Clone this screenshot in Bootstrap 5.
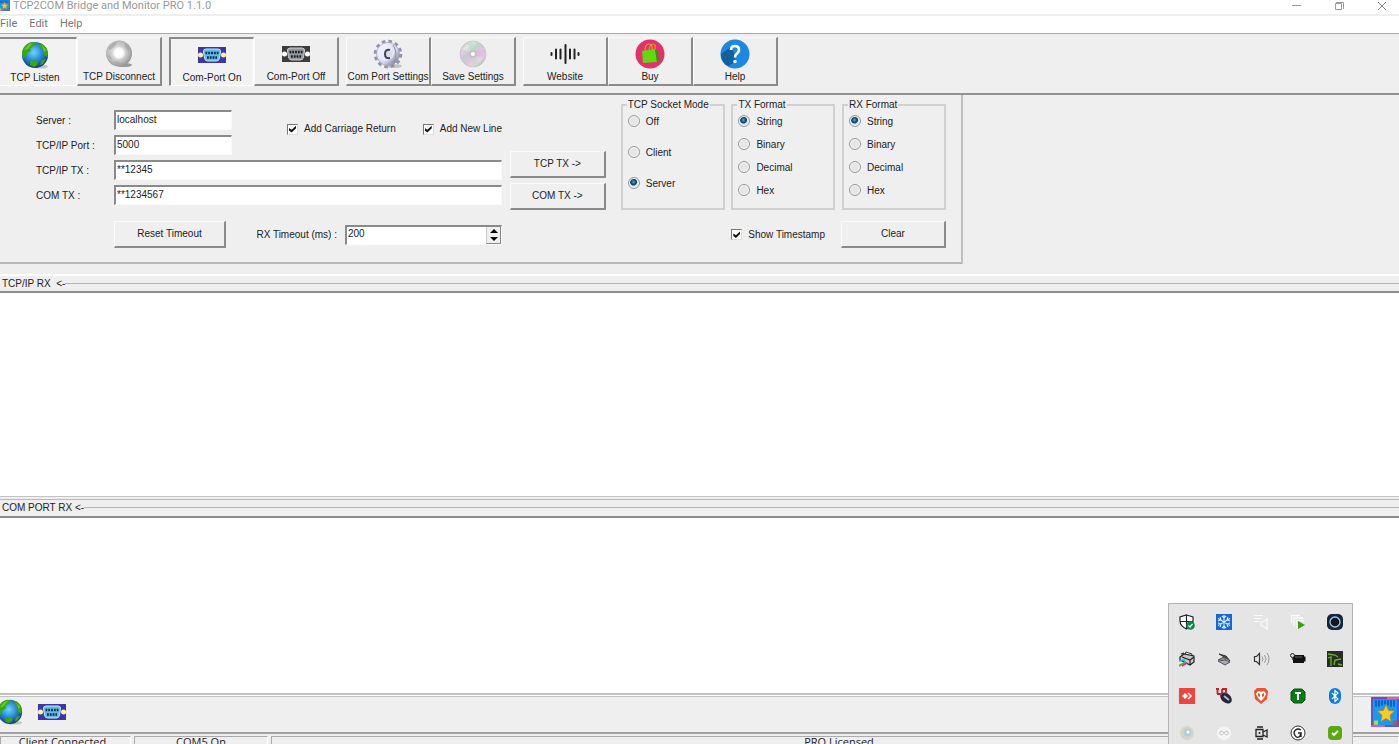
<!DOCTYPE html>
<html lang="en">
<head>
<meta charset="utf-8">
<meta name="viewport" content="width=device-width, initial-scale=1">
<title>TCP2COM Bridge and Monitor PRO 1.1.0</title>
<link href="https://cdn.jsdelivr.net/npm/bootstrap@5.3.0/dist/css/bootstrap.min.css" rel="stylesheet">
<style>
  body { font: 10px/14px "Liberation Sans", Arial, sans-serif; color: #222; background: #efefef; }
  svg { display: block; flex: none; }
  button, input, textarea { font: inherit; color: inherit; }

  .titlebar { height: 16px; background: #fff; border-bottom: 2px solid #efefef; color: #999; }
  .titlebar .caption { font: 11px/11px Roboto, sans-serif; }
  .titlebar .appicon { margin-right: 3px; }
  .wincontrols { gap: 32px; padding-right: 11px; }
  .wincontrols button { border: 0; background: none; padding: 0; color: #888; }
  .menubar { height: 17px; background: #fff; font: 11px/16px Roboto, sans-serif; gap: 12px; }
  .menubar a { color: #777; text-decoration: none; }

  .toolbar { height: 62px; border-top: 1px solid #aaa; border-bottom: 2px solid #929292; padding: 3px 0; gap: 7px; }
  .toolset { height: 50px; }
  .toolset:first-child { margin-left: -8px; }
  .raised { background: #efefef; border: 1px solid #fafafa; border-right: 2px solid #8a8a8a; border-bottom: 2px solid #8a8a8a; padding: 0; }
  .tool { width: 85px; height: 49px; white-space: nowrap; }
  .tool svg { margin: 1px 0; }
  .tool.pressed { background: #f2f2f2; border: 1px solid #fff; border-top: 2px solid #8a8a8a; border-left: 2px solid #8a8a8a; }

  .settings { width: 963px; border-right: 2px solid #c0c0c0; border-bottom: 2px solid #b8b8b8; padding: 3px 15px 14px 36px; }
  .fields { width: 466px; padding-top: 12px; }
  .fieldrow { height: 20px; margin-bottom: 5px; }
  .fieldrow > label { width: 78px; padding-top: 4px; }
  .sunken { background: #fff; border: 1px solid #fafafa; border-top: 2px solid #8a8a8a; border-left: 2px solid #8a8a8a; border-radius: 0; padding: 0 0 2px 1px; height: 20px; outline: 0; }
  .short { width: 198px; }
  .checks { margin: 12px 0 0 55px; gap: 27px; white-space: nowrap; }
  .tick { appearance: none; width: 11px; height: 11px; margin: 0 6px 0 0; background: #fff; border: 1px solid #ddd; border-top-color: #777; border-left-color: #777; display: grid; place-items: center; }
  .tick:checked::before { content: ""; width: 7px; height: 7px; background: #111; clip-path: polygon(0 35%, 38% 62%, 100% 5%, 100% 40%, 38% 100%, 0 72%); }
  .bottomrow { margin-top: 16px; padding-left: 78px; }
  .push { height: 27px; }
  .reset { width: 112px; }
  .spin { width: 157px; background: #fff; }
  .spin input { border: 0; padding: 0 0 2px 1px; outline: 0; background: transparent; }
  .stepper { width: 15px; background: #efefef; border-right: 1px solid #888; border-bottom: 1px solid #888; border-left: 1px solid #ccc; }
  .stepper button { border: 0; background: none; padding: 0; height: 8px; display: grid; place-items: center; }
  .send { width: 96px; margin: 53px 15px 0 8px; gap: 5px; }

  .choices { width: 326px; }
  .modeset { width: 104px; height: 112px; border: 2px solid #d0d0d0; padding: 0 0 0 5px; }
  .modeset legend { float: none; width: auto; font-size: 10px; line-height: 14px; margin: 0 0 3px -1px; padding: 0 1px; }
  .modeset label { height: 23px; }
  .modeset.wide label { height: 31px; }
  .dot { appearance: none; width: 12px; height: 12px; border-radius: 50%; border: 1px solid #999; background: #e6e6e6; box-shadow: inset 0 0 0 1px #f8f8f8; margin: 0 6px 0 0; }
  .dot:checked { background: radial-gradient(circle at 45% 40%, #5bb4dc 0, #14587e 2px, #123e5e 3px, #d5e4ec 4px); border-color: #8a9aa5; }
  .clear { width: 105px; }
  .lower { margin-top: 11px; }

  .rxhead { height: 19px; border-top: 2px solid #fff; border-bottom: 2px solid #8d8d8d; padding-left: 2px; white-space: pre; }
  .rxhead.upper { margin-top: 10px; }
  .rxhead hr { margin: 0; opacity: 1; border-top: 1px solid #b5b5b5; }
  .rxhead.second { height: 22px; border-top: 1px solid #c4c4c4; box-shadow: inset 0 2px #efefef, inset 0 3px #b8b8b8; padding-top: 3px; }
  .log { border: 0; resize: none; background: #fff; outline: 0; padding: 2px; min-height: 0; }
  .log.first { flex: 203 1 0; }
  .log.last { flex: 175 1 0; }
  .tools { height: 41px; border-top: 2px solid #c2c2c2; border-bottom: 2px solid #a0a0a0; box-shadow: inset 0 1px #fff, inset 0 2px #c2c2c2; padding-bottom: 4px; }
  .tools .globe { margin: 0 14px 0 -4px; }
  .statusbar { height: 10px; font: 11px/10px "Open Sans", sans-serif; text-align: center; gap: 3px; padding-top: 2px; }
  .statusbar div { border-top: 1px solid #aaa; border-left: 1px solid #aaa; border-right: 1px solid #fff; height: 20px; }
  .cell { width: 134px; }
  .cell:first-child { width: 131px; padding-right: 6px; }

  .tray { position: absolute; right: 46px; bottom: 0; width: 185px; height: 141px; background: #e5e5e5; border: 1px solid #b4b4b4; border-bottom: 0; padding: 10px 0 0; display: grid; grid-template-columns: repeat(5, 37px); grid-auto-rows: 37px; overflow: hidden; }
  .tray button { border: 0; background: none; padding: 0 0 0 10px; height: 16px; width: 37px; }
</style>
</head>
<body class="vh-100 overflow-hidden d-flex flex-column position-relative">

<svg width="0" height="0" class="position-absolute" aria-hidden="true">
  <defs>
    <radialGradient id="sea" cx=".45" cy=".4" r=".6"><stop offset="0" stop-color="#6fd4ff"/><stop offset=".5" stop-color="#2a8fdc"/><stop offset="1" stop-color="#123c86"/></radialGradient>
    <radialGradient id="silver" cx=".45" cy=".45" r=".6"><stop offset="0" stop-color="#eee"/><stop offset=".6" stop-color="#c4c4c4"/><stop offset="1" stop-color="#8c8c8c"/></radialGradient>
    <radialGradient id="glow"><stop offset="0" stop-color="#fff"/><stop offset=".6" stop-color="#fff" stop-opacity=".9"/><stop offset="1" stop-color="#fff" stop-opacity="0"/></radialGradient>
    <linearGradient id="steel" x2="1" y2="1"><stop offset="0" stop-color="#fff"/><stop offset=".6" stop-color="#d4d4ee"/><stop offset="1" stop-color="#5c6470"/></linearGradient>
    <linearGradient id="disc" x2="1" y2="1"><stop offset="0" stop-color="#aaa"/><stop offset=".25" stop-color="#e6e6e6"/><stop offset=".4" stop-color="#b9d8c9"/><stop offset=".55" stop-color="#e0c0e0"/><stop offset=".75" stop-color="#ddd"/><stop offset="1" stop-color="#8c8c8c"/></linearGradient>
    <symbol id="globe" viewBox="0 0 30 30"><ellipse cx="20" cy="26.500" rx="8" ry="2" fill="#c4c4c4"/><circle cx="15" cy="15" r="13" fill="url(#sea)"/><path d="M2 14C2 8 6 3 12 2l4 1-2 3-4 2 1 3-4 2-1 4-3 1zM20 3c4 1 7 5 8 9l-1 5-3-2-1-5-3-3zM10 21l4-1 4 2-1 3-3 2-4-2zM22 20l4-1-3 5-3 1z" fill="#39a80f"/><path d="M4 10l5-6 4-1-5 6zM22 5l4 5-2 2z" fill="#8fdc3a" opacity=".6"/></symbol>
    <symbol id="globeoff" viewBox="0 0 30 30"><ellipse cx="20" cy="26" rx="8" ry="2" fill="#999"/><circle cx="15" cy="14.500" r="13" fill="url(#silver)"/><circle cx="15" cy="14" r="7" fill="url(#glow)"/><path d="M4 9l5-5 4-1-2 4-5 4zM21 4l5 6-2 2-3-4zM10 22l5 1 2 3-5 0zM5 15l3 5-1 1-3-4z" fill="#a5a5a5" opacity=".7"/></symbol>
    <symbol id="port" viewBox="0 0 28 16"><path d="M0 0h28v16H0z" fill="var(--plate)"/><circle cx="2.500" cy="8" r="2.500" fill="var(--screw)"/><circle cx="25.500" cy="8" r="2.500" fill="var(--screw)"/><path d="M8 2h12q3 0 2.500 3l-1 6q-.5 3-3 3h-9q-2.500 0-3-3l-1-6Q5 2 8 2z" fill="var(--face)" stroke="var(--edge)"/><path d="M7.500 6h13M9 10.500h10" stroke="#123" stroke-width="2.500" stroke-dasharray="1.800 1"/></symbol>
    <symbol id="star" viewBox="0 0 28 28"><path d="M0 0h28v28H0z" fill="#149cf0"/><path d="M1 1h26v26H1z" fill="none" stroke="#7a3fc0" stroke-width="1.500"/><path d="M16 1h12M0 27h14" stroke="#f060b0" stroke-width="1.500"/><path d="M5 3v6M8 3v6M11 3v5M14 3v4M17 3v5M20 3v6M23 3v6" stroke="#1248b8" stroke-width="1.500"/><path d="M3 22h4v4H3z" fill="#a6df3f"/><path d="M22 22h4v4h-4z" fill="#c05050"/><path d="M15 7l2.500 5.500 6 .6-4.500 4 1.300 6L15 20l-5.300 3 1.300-6-4.500-4 6-.5z" fill="#ffc91f" stroke="#b87a20" stroke-width=".7"/></symbol>
  </defs>
</svg>

<header class="titlebar d-flex justify-content-between flex-shrink-0">
  <div class="d-flex">
    <svg class="appicon" width="10" height="12" viewBox="4 16 24 28"><use href="#star" y="14" width="28" height="28"/></svg>
    <span class="caption">TCP2COM Bridge and Monitor PRO 1.1.0</span>
  </div>
  <div class="wincontrols d-flex">
    <button type="button" aria-label="Minimize"><svg width="11" height="10" viewBox="0 0 11 10"><path d="M1 3.500h9" stroke="#999"/></svg></button>
    <button type="button" aria-label="Restore"><svg width="11" height="10" viewBox="0 0 11 10"><path d="M1.500 1.500h6v6h-6zM2 .5h7.500V7" fill="none" stroke="#999"/></svg></button>
    <button type="button" aria-label="Close"><svg width="11" height="10" viewBox="0 0 11 10"><path d="M1 0l8 8M9 0L1 8" stroke="#888"/></svg></button>
  </div>
</header>

<nav class="menubar d-flex flex-shrink-0" aria-label="Main">
  <a href="#">File</a><a href="#">Edit</a><a href="#">Help</a>
</nav>

<div class="toolbar d-flex flex-shrink-0">
  <div class="toolset d-flex">
    <button type="button" class="tool raised pressed d-flex flex-column align-items-center"><svg width="30" height="30"><use href="#globe"/></svg>TCP Listen</button>
    <button type="button" class="tool raised d-flex flex-column align-items-center"><svg width="30" height="30"><use href="#globeoff"/></svg>TCP Disconnect</button>
  </div>
  <div class="toolset d-flex">
    <button type="button" class="tool raised pressed d-flex flex-column align-items-center"><svg width="28" height="30" style="--plate:#3f35a5;--screw:#fff2b0;--face:#58c0f0;--edge:#bfe8ff"><use href="#port" y="7" width="28" height="16"/></svg>Com-Port On</button>
    <button type="button" class="tool raised d-flex flex-column align-items-center"><svg width="28" height="30" style="--plate:#3c3c3c;--screw:#fff;--face:#999;--edge:#ccc"><use href="#port" y="7" width="28" height="16"/></svg>Com-Port Off</button>
  </div>
  <div class="toolset d-flex">
    <button type="button" class="tool raised d-flex flex-column align-items-center"><svg width="30" height="30" viewBox="0 0 30 30"><ellipse cx="21" cy="27" rx="8" ry="2" fill="#c4c4c4"/><circle cx="15" cy="15" r="12.500" fill="none" stroke="#9093ac" stroke-width="3.500" stroke-dasharray="3.500 3.050"/><circle cx="15" cy="15" r="11.500" fill="url(#steel)" stroke="#9a9cb8" stroke-width=".7"/><circle cx="13" cy="14" r="8" fill="#f0eeff" opacity=".7"/><circle cx="15" cy="15" r="4" fill="#d8dae6"/><path d="M17 11q-5-1-5 4t5 4" fill="none" stroke="#3c4452" stroke-width="2"/><path d="M20 6q6 9 0 18" fill="none" stroke="#8e93ab" stroke-width="1"/></svg>Com Port Settings</button>
    <button type="button" class="tool raised d-flex flex-column align-items-center"><svg width="30" height="30" viewBox="0 0 30 30"><circle cx="15" cy="15" r="13" fill="url(#disc)" stroke="#bbb" stroke-width=".6"/><path d="M15 15L3 10q-2 5 0 10zM15 15l12-5q2 5 0 10z" fill="#e3a9e0" opacity=".4"/><path d="M15 15L9 4l6-2zM15 15l6 11-6 2z" fill="#b8e0c8" opacity=".6"/><circle cx="15" cy="15" r="4" fill="#c4c4c4"/><circle cx="15" cy="15" r="2" fill="#fff"/></svg>Save Settings</button>
  </div>
  <div class="toolset d-flex">
    <button type="button" class="tool raised d-flex flex-column align-items-center"><svg width="30" height="30" viewBox="0 0 30 30"><path d="M1.500 14v2M6 10.500v9M10.500 10.500v9M15.500 6v18M20 10.500v9M24.500 10.500v9M28.500 14v2" stroke="#222" stroke-width="2" stroke-linecap="round"/></svg>Website</button>
    <button type="button" class="tool raised d-flex flex-column align-items-center"><svg width="30" height="30" viewBox="0 0 30 30"><circle cx="15" cy="15" r="14.500" fill="#e3326b"/><path d="M10 12q0-7 4-7t3 7M14 11q1-6 4-6t2 6" fill="none" stroke="#e0a020" stroke-width="1.200"/><path d="M7 12l13-2 2 13-14 1z" fill="#62d813"/><path d="M20 10l3 2 1 10-2 1z" fill="#36930d"/></svg>Buy</button>
    <button type="button" class="tool raised d-flex flex-column align-items-center"><svg width="30" height="30" viewBox="0 0 30 30"><circle cx="15" cy="15" r="14.500" fill="#1e88e0"/><path d="M11 8l4 8v7L8 27Q1 23 1 15z" fill="#125f9e"/><path d="M11 11q0-4 4-4t4 4q0 2-2.500 4-1.500 1-1.500 3.500" fill="none" stroke="#fff" stroke-width="2.600"/><circle cx="15" cy="22.500" r="1.700" fill="#fff"/></svg>Help</button>
  </div>
</div>

<form class="settings d-flex flex-shrink-0">
  <div class="fields">
    <div class="d-flex">
      <div class="short">
        <div class="fieldrow d-flex"><label for="server">Server :</label><input id="server" class="sunken flex-fill w-50" value="localhost"></div>
        <div class="fieldrow d-flex"><label for="port-no">TCP/IP Port :</label><input id="port-no" class="sunken flex-fill w-50" value="5000"></div>
      </div>
      <div class="checks d-flex align-items-start">
        <label class="d-flex align-items-center"><input type="checkbox" class="tick" checked>Add Carriage Return</label>
        <label class="d-flex align-items-center"><input type="checkbox" class="tick" checked>Add New Line</label>
      </div>
    </div>
    <div class="fieldrow d-flex"><label for="tcp-tx">TCP/IP TX :</label><input id="tcp-tx" class="sunken flex-fill" value="**12345"></div>
    <div class="fieldrow d-flex"><label for="com-tx">COM TX :</label><input id="com-tx" class="sunken flex-fill" value="**1234567"></div>
    <div class="bottomrow d-flex align-items-center justify-content-between">
      <button type="button" class="push raised reset">Reset Timeout</button>
      <div class="d-flex align-items-center gap-2">
        <label for="timeout">RX Timeout (ms) :</label>
        <div class="spin sunken d-flex p-0">
          <input id="timeout" class="flex-fill w-50" value="200">
          <div class="stepper d-flex flex-column">
            <button type="button" aria-label="Increase"><svg width="8" height="4" viewBox="0 0 8 4"><path d="M0 4l4-4 4 4z"/></svg></button>
            <button type="button" aria-label="Decrease"><svg width="8" height="4" viewBox="0 0 8 4"><path d="M0 0l4 4 4-4z"/></svg></button>
          </div>
        </div>
      </div>
    </div>
  </div>

  <div class="send d-flex flex-column">
    <button type="button" class="push raised">TCP TX -&gt;</button>
    <button type="button" class="push raised">COM TX -&gt;</button>
  </div>

  <div class="choices">
    <div class="d-flex justify-content-between">
      <fieldset class="modeset wide">
        <legend>TCP Socket Mode</legend>
        <label class="d-flex align-items-start"><input type="radio" name="mode" class="dot">Off</label>
        <label class="d-flex align-items-start"><input type="radio" name="mode" class="dot">Client</label>
        <label class="d-flex align-items-start"><input type="radio" name="mode" class="dot" checked>Server</label>
      </fieldset>
      <fieldset class="modeset">
        <legend>TX Format</legend>
        <label class="d-flex align-items-start"><input type="radio" name="tx" class="dot" checked>String</label>
        <label class="d-flex align-items-start"><input type="radio" name="tx" class="dot">Binary</label>
        <label class="d-flex align-items-start"><input type="radio" name="tx" class="dot">Decimal</label>
        <label class="d-flex align-items-start"><input type="radio" name="tx" class="dot">Hex</label>
      </fieldset>
      <fieldset class="modeset">
        <legend>RX Format</legend>
        <label class="d-flex align-items-start"><input type="radio" name="rx" class="dot" checked>String</label>
        <label class="d-flex align-items-start"><input type="radio" name="rx" class="dot">Binary</label>
        <label class="d-flex align-items-start"><input type="radio" name="rx" class="dot">Decimal</label>
        <label class="d-flex align-items-start"><input type="radio" name="rx" class="dot">Hex</label>
      </fieldset>
    </div>
    <div class="lower d-flex align-items-center justify-content-end">
      <label class="d-flex align-items-center me-3"><input type="checkbox" class="tick" checked>Show Timestamp</label>
      <button type="button" class="push raised clear">Clear</button>
    </div>
  </div>
</form>

<div class="rxhead upper d-flex align-items-center flex-shrink-0"><label for="tcp-rx">TCP/IP RX  &lt;-</label><hr class="flex-fill"></div>
<textarea id="tcp-rx" class="log first w-100" readonly></textarea>
<div class="rxhead second d-flex align-items-center flex-shrink-0"><label for="com-rx">COM PORT RX &lt;-</label><hr class="flex-fill"></div>
<textarea id="com-rx" class="log last w-100" readonly></textarea>

<div class="tools d-flex align-items-center flex-shrink-0">
  <svg class="globe" width="28" height="28"><use href="#globe"/></svg>
  <svg width="28" height="16" style="--plate:#3f35a5;--screw:#fff2b0;--face:#58c0f0;--edge:#bfe8ff"><use href="#port"/></svg>
  <svg class="ms-auto" width="28" height="30" viewBox="0 0 28 28" preserveAspectRatio="none"><use href="#star"/></svg>
</div>
<footer class="statusbar d-flex flex-shrink-0">
  <div class="cell">Client Connected</div><div class="cell">COM5 On</div><div class="flex-fill ps-2">PRO Licensed</div>
</footer>

<div class="tray" role="toolbar" aria-label="Hidden icons">
  <button type="button" aria-label="Security"><svg width="16" height="16" viewBox="0 0 16 16"><path d="M7.500 1L14 3v4q0 5-6.500 8Q1 12 1 7V3zM7.500 1v14M1 7.500h13" fill="#fff" stroke="#222" stroke-width="1.200"/><circle cx="11.500" cy="11.500" r="4.300" fill="#14854a"/><path d="M9.500 11.500l1.500 1.500 2.500-3" fill="none" stroke="#fff" stroke-width="1.200"/></svg></button>
  <button type="button" aria-label="Snowflake"><svg width="16" height="16" viewBox="0 0 16 16"><path d="M0 0h16v16H0z" fill="#1565d8"/><path d="M8 1v14M2 4.500l12 7M14 4.500l-12 7M6 2l2 2 2-2M6 14l2-2 2 2M2 7l3-1-1-3M14 7l-3-1 1-3M2 9l3 1-1 3M14 9l-3 1 1 3" fill="none" stroke="#d8f2ff" stroke-width="1.100"/></svg></button>
  <button type="button" aria-label="Audio list"><svg width="16" height="16" viewBox="0 0 16 16"><path d="M1 1.500h9M1 4.500h7M1 7.500h5M8 8h2l4-3v10l-4-3H8z" fill="none" stroke="#fafafa" stroke-width="1.200"/></svg></button>
  <button type="button" aria-label="Run"><svg width="16" height="16" viewBox="0 0 16 16"><path d="M1.500 9V1.500H10M4 12V4h9M6.500 14V6.500H14" fill="none" stroke="#fafafa" stroke-width="1.300"/><path d="M8 7l7 4-7 4z" fill="#3c9c17"/></svg></button>
  <button type="button" aria-label="Ring"><svg width="16" height="16" viewBox="0 0 16 16"><rect width="16" height="16" rx="5" fill="#14243a"/><circle cx="8" cy="8" r="5" fill="#101820" stroke="#a9c8ea" stroke-width="1.300"/></svg></button>

  <button type="button" aria-label="Printer"><svg width="16" height="16" viewBox="0 0 16 16"><path d="M5 6l2-5 6 2-1 4z" fill="#fff" stroke="#333"/><path d="M1 6l4-3 10 2v6l-4 3-10-5z" fill="#c8c8c8" stroke="#222" stroke-width="1.200"/><path d="M3 6l8 3 4-3M11 9v4M2 3l3-1" stroke="#222" stroke-width="1.200" fill="none"/><path d="M0 10l6-1" stroke="#1bb6d0" stroke-width="1.500"/><path d="M0 15l7-4" stroke="#46b32b" stroke-width="2"/><path d="M3 15l5-3" stroke="#d02bb0" stroke-width="1.500"/></svg></button>
  <button type="button" aria-label="Scanner"><svg width="16" height="16" viewBox="0 0 16 16"><path d="M3 3l7 2 4 5-4-3z" fill="#555" stroke="#333"/><path d="M2 9l6-3 3 4" fill="#999" stroke="#444"/><path d="M2 10l7 4 5-3-5-2z" fill="#aab" stroke="#555"/></svg></button>
  <button type="button" aria-label="Volume"><svg width="17" height="16" viewBox="0 0 17 16"><path d="M1.500 5.500h2l3-3v11l-3-3h-2z" fill="none" stroke="#333" stroke-width="1.200"/><path d="M9 5.500q2 2.500 0 5M11.500 4q3 4 0 8M14 2q4 6 0 12" fill="none" stroke="#999"/></svg></button>
  <button type="button" aria-label="Power"><svg width="16" height="16" viewBox="0 0 16 16"><path d="M3 4h11v1.500h1.500v5H14V12H3z" fill="#111"/><circle cx="2.500" cy="4.500" r="2" fill="#ddd" stroke="#222"/><path d="M3 6v3" stroke="#222" stroke-width="1.500"/><path d="M5 6h7" stroke="#666"/></svg></button>
  <button type="button" aria-label="Graphics"><svg width="16" height="16" viewBox="0 0 16 16"><path d="M0 0h16v16H0z" fill="#262c26"/><path d="M1 3l7 1 3 2M1 7l3-1v9M7 14l1-5 6-1M11 13l4 1" fill="none" stroke="#6ab81e" stroke-width="1.300"/></svg></button>

  <button type="button" aria-label="Remote desktop"><svg width="16" height="16" viewBox="0 0 16 16"><path d="M0 0h16v16H0z" fill="#ef443b"/><path d="M6 5l3 3-3 3-3-3z" fill="#fff"/><path d="M9 5l3 3-3 3" fill="none" stroke="#fff" stroke-width="1.500"/></svg></button>
  <button type="button" aria-label="Mouse utility"><svg width="16" height="16" viewBox="0 0 16 16"><ellipse cx="10" cy="10" rx="6.500" ry="4.500" transform="rotate(40 10 10)" fill="#26243c"/><path d="M8 8l5 4" stroke="#b8b8cc" stroke-width="2"/><path d="M0 1h3M1.500 1v5M6 1h5M6 1v5M10 1v5M1 6h5" fill="none" stroke="#c81e28" stroke-width="1.800"/></svg></button>
  <button type="button" aria-label="Browser"><svg width="16" height="16" viewBox="0 0 16 16"><path d="M4 0h8l3 3-1 8-6 5-6-5-1-8z" fill="#f0502c"/><path d="M4 4l2-1 2 1 2-1 2 1 1 2-2 4-3 3-3-3-2-4z" fill="#fff"/><path d="M5 5l2 1v3L5 8zM11 5L9 6v3l2-1z" fill="#f0502c"/></svg></button>
  <button type="button" aria-label="Terminal"><svg width="16" height="16" viewBox="0 0 16 16"><path d="M4 1h8l3 3v8l-3 3H4l-3-3V4z" fill="#087a16" stroke="#065b10"/><path d="M5 5h6M8 5v7" stroke="#fff" stroke-width="2"/></svg></button>
  <button type="button" aria-label="Bluetooth"><svg width="16" height="16" viewBox="0 0 16 16"><rect x="2" width="12" height="16" rx="6" fill="#0a7be0"/><path d="M5 5l6 6-3 2.500v-11L11 5l-6 6" fill="none" stroke="#fff" stroke-width="1.200"/></svg></button>

  <button type="button" aria-label="Disc"><svg width="16" height="16" viewBox="0 0 16 16"><circle cx="8" cy="8" r="7" fill="#d8d4cb"/><circle cx="8.500" cy="7.500" r="4" fill="#b4cfd0"/><circle cx="9" cy="7" r="1.500" fill="#fff"/></svg></button>
  <button type="button" aria-label="Cloud"><svg width="16" height="16" viewBox="0 0 16 16"><circle cx="8" cy="8" r="7" fill="#f5f5f5"/><path d="M8 8q-2-2.500-3.500-1.500t0 3Q6 10.500 8 8t3.500-1.500 0 3Q10 10.500 8 8z" fill="none" stroke="#ccc" stroke-width="1.200"/></svg></button>
  <button type="button" aria-label="Camera"><svg width="16" height="16" viewBox="0 0 16 16"><path d="M3 4.500h7v7H3zM10 7l4-2v7l-4-2M4 2h6M4 14h6" fill="none" stroke="#222" stroke-width="1.300"/><circle cx="6.500" cy="8" r="1" fill="#222"/></svg></button>
  <button type="button" aria-label="Sync"><svg width="16" height="16" viewBox="0 0 16 16"><circle cx="8" cy="8" r="7" fill="#fff" stroke="#333"/><path d="M11 5q-3-2-5.500 0T5 10.500t5 .5l1-3H8M11 8v4" fill="none" stroke="#222" stroke-width="1.400"/></svg></button>
  <button type="button" aria-label="Status OK"><svg width="16" height="16" viewBox="0 0 16 16"><rect x="1" y="1" width="14" height="14" rx="4" fill="#5aa812"/><path d="M5 8l2 2 4-4" fill="none" stroke="#fff" stroke-width="1.800"/></svg></button>
</div>

<script src="https://cdn.jsdelivr.net/npm/bootstrap@5.3.0/dist/js/bootstrap.bundle.min.js"></script>
</body>
</html>
